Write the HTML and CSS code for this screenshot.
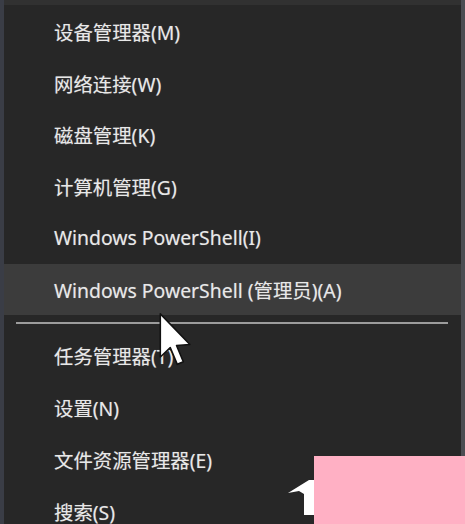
FILE: index.html
```html
<!DOCTYPE html>
<html lang="zh-CN">
<head>
<meta charset="utf-8">
<link rel="stylesheet" href="styles.css">
</head>
<body>
<div class="frame">
  <div class="menu">
    <div class="item">设备管理器(M)</div>
    <div class="item">网络连接(W)</div>
    <div class="item">磁盘管理(K)</div>
    <div class="item">计算机管理(G)</div>
    <div class="item">Windows PowerShell(I)</div>
    <div class="item active">Windows PowerShell (管理员)(A)</div>
    <div class="sep"></div>
    <div class="item low">任务管理器(T)</div>
    <div class="item low">设置(N)</div>
    <div class="item low">文件资源管理器(E)</div>
    <div class="item low">搜索(S)</div>
  </div>
  <svg class="cursor" width="34" height="56" viewBox="0 0 13 21">
    <path d="M0.5 0.5 L0.5 17 L4.3 13.4 L7 19.8 L9.3 18.8 L6.7 12.6 L11.8 12.2 Z" fill="#ffffff" stroke="#111" stroke-width="0.6" stroke-linejoin="round"/>
  </svg>
  <svg class="logo" width="30" height="40" viewBox="0 0 30 40">
    <path d="M0 14 L21 1 L27 1 L27 36 L16 36 L16 15 L11 12 Z" fill="#ffffff"/>
    <path d="M16 16 L26 16 L26 20 L16 20 Z M16 28 L26 28 L26 32 L16 32 Z" fill="#ffffff"/>
  </svg>
  <div class="mark"></div>
</div>
</body>
</html>
```
FILE: styles.css
```css
html, body {
  margin: 0;
  padding: 0;
}
body {
  width: 465px;
  height: 524px;
  overflow: hidden;
  background: #3a3d45;
  font-family: "Noto Sans", "Noto Sans CJK SC", sans-serif;
}
.frame {
  position: relative;
  width: 465px;
  height: 524px;
  display: flex;
  background: linear-gradient(to right, #3a3d46 0, #3a3d46 4px, transparent 4px, transparent 461px, #4b4d52 461px);
}
.menu {
  margin-left: 4px;
  width: 457px;
  height: 524px;
  box-sizing: border-box;
  background: #272727;
  border-top: 5px solid #313131;
  padding-top: 1px;
  display: flex;
  flex-direction: column;
  overflow: hidden;
}
.item {
  flex: 0 0 51.5px;
  display: flex;
  align-items: center;
  padding-left: 50px;
  color: #e8e8e8;
  font-size: 19.4px;
  white-space: nowrap;
  text-shadow: 0 0 1px rgba(255,255,255,0.35);
}
.item.low {
  flex-basis: 52px;
}
.item.active {
  background: #3c3c3c;
}
.sep {
  flex: 0 0 2px;
  margin: 7px 13px 5px 12px;
  background: #9c9c9c;
}
.cursor {
  position: absolute;
  left: 159px;
  top: 312px;
}
.logo {
  position: absolute;
  left: 288px;
  top: 479px;
}
.mark {
  position: absolute;
  left: 314px;
  top: 456px;
  width: 151px;
  height: 68px;
  background: #ffb0c4;
}
```
